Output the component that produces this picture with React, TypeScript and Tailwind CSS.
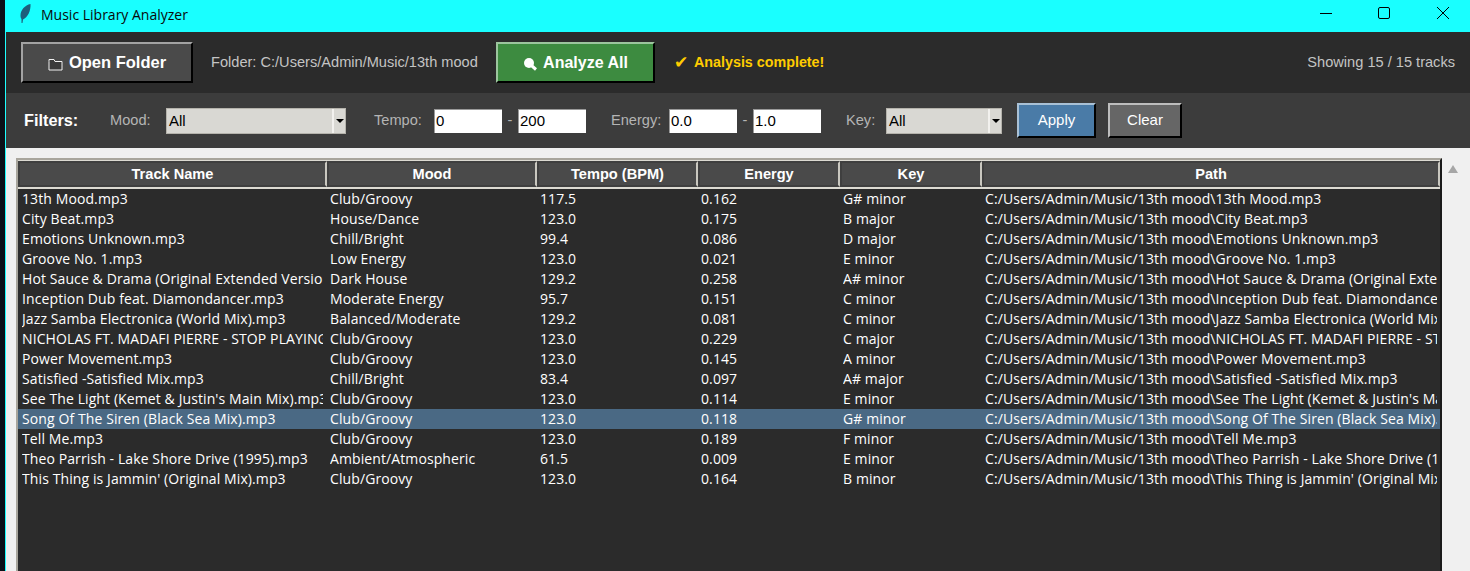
const tracks = [
  ['13th Mood.mp3', 'Club/Groovy', '117.5', '0.162', 'G# minor', '13th Mood.mp3'],
  ['City Beat.mp3', 'House/Dance', '123.0', '0.175', 'B major', 'City Beat.mp3'],
  ['Emotions Unknown.mp3', 'Chill/Bright', '99.4', '0.086', 'D major', 'Emotions Unknown.mp3'],
  ['Groove No. 1.mp3', 'Low Energy', '123.0', '0.021', 'E minor', 'Groove No. 1.mp3'],
  ['Hot Sauce & Drama (Original Extended Version).mp3', 'Dark House', '129.2', '0.258', 'A# minor', 'Hot Sauce & Drama (Original Extended Version).mp3'],
  ['Inception Dub feat. Diamondancer.mp3', 'Moderate Energy', '95.7', '0.151', 'C minor', 'Inception Dub feat. Diamondancer.mp3'],
  ['Jazz Samba Electronica (World Mix).mp3', 'Balanced/Moderate', '129.2', '0.081', 'C minor', 'Jazz Samba Electronica (World Mix).mp3'],
  ['NICHOLAS FT. MADAFI PIERRE - STOP PLAYING.mp3', 'Club/Groovy', '123.0', '0.229', 'C major', 'NICHOLAS FT. MADAFI PIERRE - STOP PLAYING.mp3'],
  ['Power Movement.mp3', 'Club/Groovy', '123.0', '0.145', 'A minor', 'Power Movement.mp3'],
  ['Satisfied -Satisfied Mix.mp3', 'Chill/Bright', '83.4', '0.097', 'A# major', 'Satisfied -Satisfied Mix.mp3'],
  ["See The Light (Kemet & Justin's Main Mix).mp3", 'Club/Groovy', '123.0', '0.114', 'E minor', "See The Light (Kemet & Justin's Main Mix).mp3"],
  ['Song Of The Siren (Black Sea Mix).mp3', 'Club/Groovy', '123.0', '0.118', 'G# minor', 'Song Of The Siren (Black Sea Mix).mp3'],
  ['Tell Me.mp3', 'Club/Groovy', '123.0', '0.189', 'F minor', 'Tell Me.mp3'],
  ['Theo Parrish - Lake Shore Drive (1995).mp3', 'Ambient/Atmospheric', '61.5', '0.009', 'E minor', 'Theo Parrish - Lake Shore Drive (1995).mp3'],
  ["This Thing is Jammin' (Original Mix).mp3", 'Club/Groovy', '123.0', '0.164', 'B minor', "This Thing is Jammin' (Original Mix).mp3"],
];

const headers = ['Track Name', 'Mood', 'Tempo (BPM)', 'Energy', 'Key', 'Path'];
const columns = 'grid grid-cols-[308px_210px_161px_142px_142px_459px]';
const cell = 'overflow-hidden whitespace-nowrap ml-[4px] mr-[3px]';

function Combo({ width }: { width: string }) {
  return (
    <div className={`${width} h-[26px] flex items-stretch border border-[#b5b3ac] bg-[#d9d8d3] text-[15px] text-black`}>
      <span className="flex-1 pl-[2px] leading-[24px]">All</span>
      <span className="w-[13px] flex items-center justify-center border-l-2 border-[#f2f1ee] bg-[#d9d8d3]">
        <span className="border-x-[4px] border-t-[4px] border-x-transparent border-t-black" />
      </span>
    </div>
  );
}

function NumberBox({ value }: { value: string }) {
  return (
    <div className="w-[68px] h-[24px] bg-white border-l border-t border-[#9a9a9a] pl-[1px] text-[15px] leading-[22px] text-black">
      {value}
    </div>
  );
}

export default function App() {
  return (
    <div className="h-[571px] w-[1470px] flex overflow-hidden bg-[#0b1118]" style={{ fontFamily: '"Liberation Sans", sans-serif' }}>
      <div className="w-[5px] shrink-0 bg-[#0b1118]" />
      <div className="flex-1 min-w-0 flex flex-col border-l border-[#1effff]">
        {/* Title bar */}
        <div className="h-[32px] shrink-0 bg-[#19ffff] flex items-center pb-[4px] text-black">
          <svg className="ml-[11px]" width="18" height="20" viewBox="0 0 18 20">
            <path d="M13.500 0C8 1 3.500 6 3.500 11.500c0 1.500.3 2.500 1 3.500L4.500 19h1L6 15.500C10.500 13.500 14 7 13.500 0Z" fill="#1d5f7c" />
          </svg>
          <span className="ml-[6px] text-[14px] text-[#0a0a0a]" style={{ fontFamily: '"Open Sans", sans-serif' }}>
            Music Library Analyzer
          </span>
          <div className="ml-auto mb-[2px] flex items-center">
            <svg width="12" height="12" viewBox="0 0 12 12" className="mr-[46px]"><path d="M0 6.500H12" stroke="#000" /></svg>
            <svg width="12" height="12" viewBox="0 0 12 12" className="mr-[47px]"><rect x=".5" y=".5" width="11" height="11" rx="1.500" fill="none" stroke="#000" /></svg>
            <svg width="12" height="12" viewBox="0 0 12 12" className="mr-[21px]"><path d="M0 0 12 12M12 0 0 12" stroke="#000" /></svg>
          </div>
        </div>

        {/* Toolbar */}
        <div className="h-[61px] shrink-0 bg-[#2b2b2b] flex items-center pl-[15px] pr-[15px]">
          <button className="w-[172px] h-[41px] flex items-center justify-center gap-[6px] bg-[#4a4a4a] border-2 border-t-[#a3a3a3] border-l-[#a3a3a3] border-r-black border-b-black text-[16.500px] font-bold text-white">
            <svg width="15" height="13" viewBox="0 0 15 13" className="mt-[3px]">
              <path d="M1 3.500V1.500H6L7 3.500H14V12H1Z" fill="#3b3b3b" stroke="#f2f2f2" />
            </svg>
            Open Folder
          </button>
          <span className="ml-[18px] w-[285px] text-[14.600px] text-[#c4c4c4]">Folder: C:/Users/Admin/Music/13th mood</span>
          <button className="w-[159px] h-[41px] flex items-center justify-center gap-[6px] bg-[#3d8b40] border-2 border-t-[#9cc59e] border-l-[#9cc59e] border-r-black border-b-black text-[16px] font-bold text-white">
            <svg width="14" height="14" viewBox="0 0 14 14" className="mt-[3px]">
              <circle cx="6" cy="6" r="5" fill="#fff" />
              <path d="M9 9 13 12.500" stroke="#fff" strokeWidth="3" />
            </svg>
            Analyze All
          </button>
          <span className="ml-[19px] w-[20px] text-[17px] leading-none text-[#ffcc00]" style={{ fontFamily: '"DejaVu Sans", sans-serif' }}>✔</span>
          <span className="text-[14.300px] font-bold text-[#ffcc00]">Analysis complete!</span>
          <span className="ml-auto text-[14.600px] text-[#c4c4c4]">Showing 15 / 15 tracks</span>
        </div>

        {/* Filter bar */}
        <div className="h-[55px] shrink-0 bg-[#3c3c3c] flex items-center pl-[18px] text-[14.600px] text-[#b4b4b4]">
          <span className="w-[86px] text-[16.300px] font-bold text-white">Filters:</span>
          <span className="w-[56px]">Mood:</span>
          <Combo width="w-[180px]" />
          <span className="ml-[28px] w-[60px]">Tempo:</span>
          <NumberBox value="0" />
          <span className="w-[16px] text-center">-</span>
          <NumberBox value="200" />
          <span className="ml-[25px] w-[58px]">Energy:</span>
          <NumberBox value="0.0" />
          <span className="w-[16px] text-center">-</span>
          <NumberBox value="1.0" />
          <span className="ml-[25px] w-[40px]">Key:</span>
          <Combo width="w-[116px]" />
          <button className="ml-[15px] w-[79px] h-[35px] bg-[#4a7ba7] border-2 border-t-[#a9c1d6] border-l-[#a9c1d6] border-r-black border-b-black text-[15px] text-white">
            Apply
          </button>
          <button className="ml-[12px] w-[74px] h-[35px] bg-[#666666] border-2 border-t-[#bdbdbd] border-l-[#bdbdbd] border-r-black border-b-black text-[15px] text-white">
            Clear
          </button>
        </div>

        {/* Track table */}
        <div className="flex-1 min-h-0 bg-[#f0f0f0] flex pl-[10px] pt-[10px]">
          <div className="w-[1426px] border-2 border-b-0 border-[#a8a59c] border-r-[#1a1a1a] bg-[#2b2b2b] overflow-hidden text-[14px] tracking-[0.1px] text-white" style={{ fontFamily: '"Open Sans", sans-serif' }}>
            <div className="grid grid-cols-[309px_210px_161px_142px_142px_458px] h-[29px] border-t border-[#dcdad2] border-b-2 border-b-[#dcdad2]">
              {headers.map((header) => (
                <div
                  key={header}
                  className="bg-[#4a4a4a] border-2 border-[#3f3f3f] border-r-[#c9c7bf] text-center text-[14.600px] font-bold tracking-normal leading-[22px] text-white"
                  style={{ fontFamily: '"Liberation Sans", sans-serif' }}
                >
                  {header}
                </div>
              ))}
            </div>
            {tracks.map((track, index) => (
              <div key={track[0]} className={`${columns} h-[20px] leading-[20px] ${index === 11 ? 'bg-[#4a6984]' : ''}`}>
                <div className={cell}>{track[0]}</div>
                <div className={cell}>{track[1]}</div>
                <div className={cell}>{track[2]}</div>
                <div className={cell}>{track[3]}</div>
                <div className={cell}>{track[4]}</div>
                <div className={cell}>C:/Users/Admin/Music/13th mood\{track[5]}</div>
              </div>
            ))}
          </div>
          <div className="ml-[6px] mt-[7px] h-0 w-0 border-x-[5px] border-b-[8px] border-x-transparent border-b-[#a6a6a6]" />
        </div>
      </div>
    </div>
  );
}
